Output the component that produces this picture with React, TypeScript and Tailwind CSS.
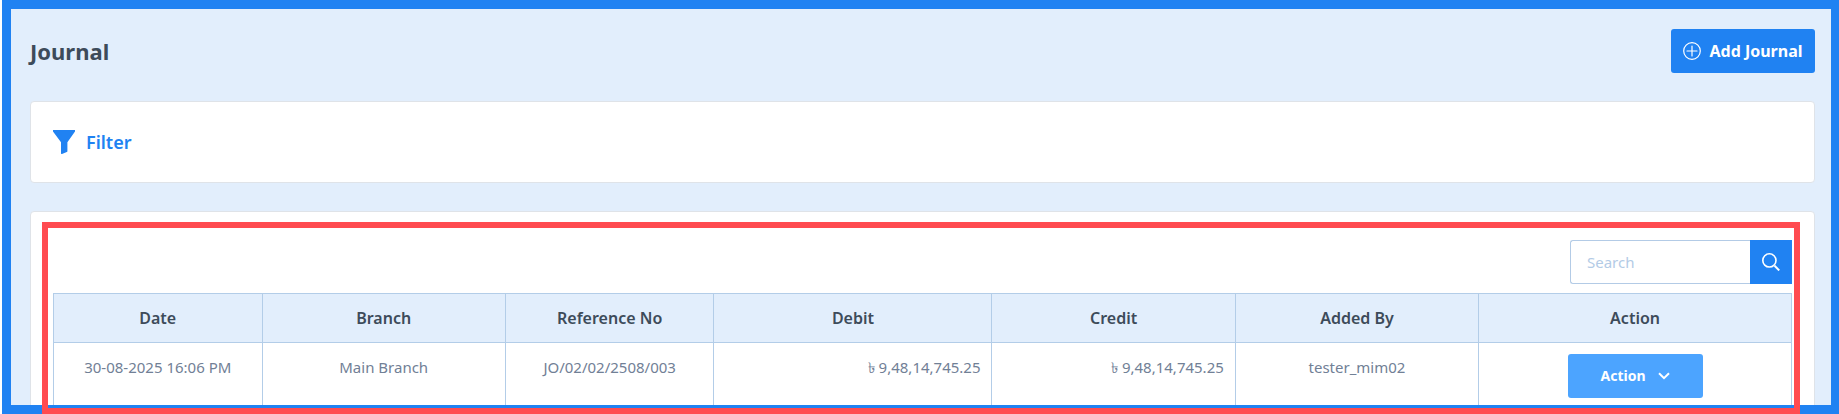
import React from "react";

type Column = { label: string; width: string; align: string };

const columns: Column[] = [
  { label: "Date", width: "w-[12%]", align: "text-center" },
  { label: "Branch", width: "w-[14%]", align: "text-center" },
  { label: "Reference No", width: "w-[12%]", align: "text-center" },
  { label: "Debit", width: "w-[16%]", align: "text-right" },
  { label: "Credit", width: "w-[14%]", align: "text-right" },
  { label: "Added By", width: "w-[14%]", align: "text-center" },
  { label: "Action", width: "w-[18%]", align: "text-center" },
];

const rows: string[][] = [
  ["30-08-2025 16:06 PM", "Main Branch", "JO/02/02/2508/003", "৳ 9,48,14,745.25", "৳ 9,48,14,745.25", "tester_mim02"],
];

function PlusCircle() {
  return (
    <svg viewBox="0 0 18 18" className="size-[18px]" fill="none" stroke="currentColor" strokeWidth="1.2" aria-hidden="true">
      <circle cx="9" cy="9" r="8.3" />
      <path d="M9 4v10M4 9h10" strokeLinecap="round" />
    </svg>
  );
}

function Funnel() {
  return (
    <svg viewBox="0 0 22 24" className="h-6 w-[22px]" fill="currentColor" aria-hidden="true">
      <path d="M0 0h22v1.6L14.4 12.2v9q0 .6-.6.9L9 24q-1 .2-1-.8V12.2L0 1.6z" />
    </svg>
  );
}

function Magnifier() {
  return (
    <svg viewBox="0 0 18 18" className="size-[18px]" fill="none" stroke="currentColor" aria-hidden="true">
      <circle cx="7.4" cy="7.4" r="6.6" strokeWidth="1.6" />
      <path d="M12.6 12.8L17.2 17.4" strokeWidth="2" />
    </svg>
  );
}

function Chevron() {
  return (
    <svg viewBox="0 0 12 8" className="h-2 w-3" fill="none" stroke="currentColor" strokeWidth="2" aria-hidden="true">
      <path d="M1 1.2l5 5 5-5" />
    </svg>
  );
}

export default function App() {
  return (
    <div className="relative h-screen overflow-hidden bg-white pl-0.5 font-['Noto_Sans',sans-serif]">
      <div className="flex h-full flex-col overflow-hidden border-[9px] border-r-8 border-[#2082f2] bg-[#e2eefc] pt-5 pr-4 pl-[19px]">
        <header className="flex shrink-0 items-center justify-between">
          <h1 className="text-[22px] leading-8 font-bold text-[#3d4b5a]">Journal</h1>
          <button type="button" className="flex h-11 w-36 items-center justify-center gap-2 rounded-[3px] bg-[#2082f2] text-base font-bold whitespace-nowrap text-white">
            <PlusCircle />
            Add Journal
          </button>
        </header>

        <section className="mt-7 shrink-0 rounded border border-[#dfe3e8] bg-white px-[22px] py-6">
          <button type="button" className="flex h-8 items-center gap-[11px] text-lg font-semibold text-[#2082f2]">
            <Funnel />
            Filter
          </button>
        </section>

        <section className="mt-7 shrink-0 rounded border border-[#dfe3e8] bg-white px-[22px] pt-7 pb-6">
          <form className="flex justify-end" onSubmit={(e) => e.preventDefault()}>
            <input
              type="text"
              aria-label="Search"
              placeholder="Search"
              className="h-11 w-[180px] rounded-l-[3px] border border-r-0 border-[#b3cbe6] bg-white px-4 text-[15px] text-[#718096] outline-none placeholder:text-[#b3cbe6]"
            />
            <button type="submit" aria-label="Submit search" className="flex h-11 w-[42px] items-center justify-center bg-[#2082f2] text-white">
              <Magnifier />
            </button>
          </form>

          <table className="mt-[9px] w-full table-fixed border-collapse">
            <thead>
              <tr className="bg-[#e2eefc]">
                {columns.map((c) => (
                  <th key={c.label} scope="col" className={`${c.width} h-[49px] border border-[#b3cde8] text-base font-semibold text-[#3d4b5a]`}>
                    {c.label}
                  </th>
                ))}
              </tr>
            </thead>
            <tbody>
              {rows.map((row) => (
                <tr key={row[2]}>
                  {row.map((value, i) => (
                    <td key={columns[i].label} className={`${columns[i].align} border border-[#b3cde8] px-[11px] py-3 align-top text-[15px] leading-6 whitespace-nowrap text-[#718096]`}>
                      {value}
                    </td>
                  ))}
                  <td className="border border-[#b3cde8] px-3 py-[11px]">
                    <button type="button" className="mx-auto flex h-11 w-[135px] items-center justify-center gap-3 rounded-[3px] bg-[#4ca4ff] text-sm font-bold text-white">
                      Action
                      <Chevron />
                    </button>
                  </td>
                </tr>
              ))}
            </tbody>
          </table>
        </section>
      </div>
      <div className="pointer-events-none absolute top-[222px] right-[39px] bottom-0 left-[42px] border-[6px] border-[#ff4b50]" />
    </div>
  );
}
